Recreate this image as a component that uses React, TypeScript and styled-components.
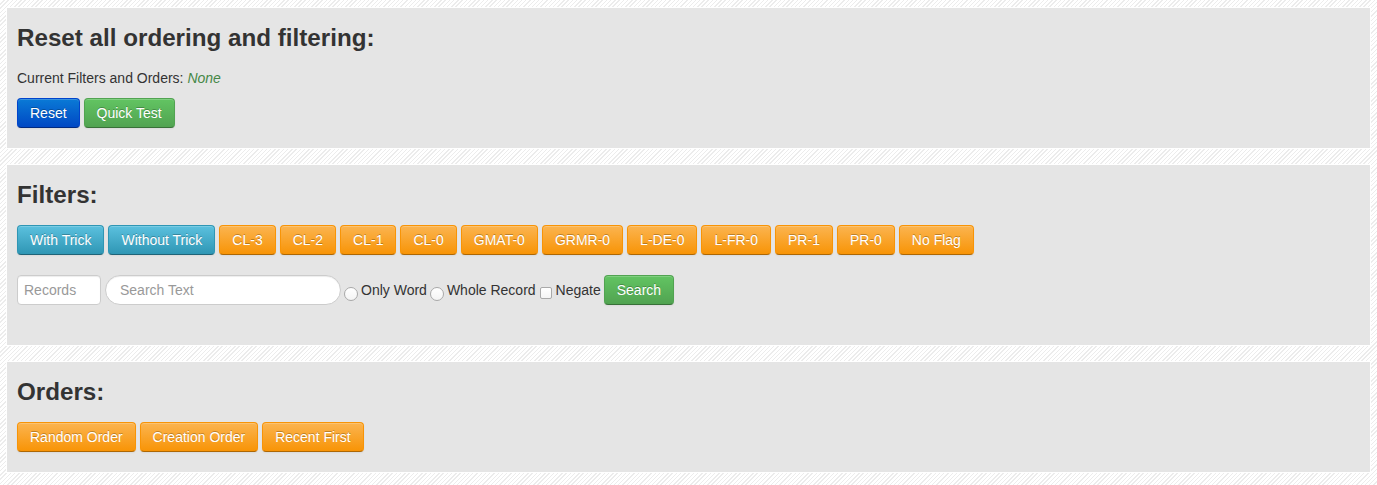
import React from "react";
import styled, { createGlobalStyle, css } from "styled-components";

const GlobalStyle = createGlobalStyle`
  html, body {
    margin: 0;
    padding: 0;
  }
  body {
    font-family: "Liberation Sans", Arial, Helvetica, sans-serif;
    font-size: 14px;
    line-height: 20px;
    color: #333;
    background-color: #fbfbfb;
    background-image: repeating-linear-gradient(
      -45deg,
      #ffffff 0px,
      #ffffff 2px,
      #ececec 2px,
      #ececec 3px
    );
    min-height: 485px;
  }
`;

const Page = styled.div`
  padding: 7px 6px 8px 6px;
  display: flex;
  flex-direction: column;
  gap: 15px;
`;

const Panel = styled.section<{ $bottom?: number }>`
  background: #e5e5e5;
  border: 1px solid #ffffff;
  padding: 10px 10px ${(p) => p.$bottom ?? 20}px 10px;
`;

const Heading = styled.h3`
  margin: 0 0 10px 0;
  font-size: 24.2px;
  line-height: 40px;
  font-weight: bold;
  color: #333;
`;

const Info = styled.p`
  margin: 0 0 10px 0;
  font-size: 14px;
  line-height: 20px;
`;

const NoneText = styled.em`
  color: #468847;
`;

const ButtonRow = styled.div`
  display: flex;
  flex-wrap: wrap;
  gap: 4px;
`;

type Variant = "primary" | "success" | "info" | "warning";

const variants: Record<Variant, ReturnType<typeof css>> = {
  primary: css`
    background-image: linear-gradient(to bottom, #0a7ad6, #0048c4);
    border-color: #0044cc #0044cc #002a80;
  `,
  success: css`
    background-image: linear-gradient(to bottom, #62c462, #51a351);
    border-color: #51a351 #51a351 #387038;
  `,
  info: css`
    background-image: linear-gradient(to bottom, #5bc0de, #2f96b4);
    border-color: #2f96b4 #2f96b4 #1f6377;
  `,
  warning: css`
    background-image: linear-gradient(to bottom, #fbb450, #f89406);
    border-color: #f89406 #f89406 #ad6704;
  `,
};

const Button = styled.button<{ $variant: Variant }>`
  font-family: "Liberation Sans", Arial, Helvetica, sans-serif;
  font-size: 14px;
  line-height: 20px;
  padding: 4px 12px;
  height: 30px;
  color: #fff;
  text-shadow: 0 -1px 0 rgba(0, 0, 0, 0.25);
  border: 1px solid;
  border-radius: 4px;
  box-shadow: inset 0 1px 0 rgba(255, 255, 255, 0.2), 0 1px 2px rgba(0, 0, 0, 0.05);
  cursor: pointer;
  white-space: nowrap;
  ${(p) => variants[p.$variant]}
`;

const SearchForm = styled.form`
  display: flex;
  align-items: center;
  margin-top: 20px;
`;

const baseInput = css`
  font-family: "Liberation Sans", Arial, Helvetica, sans-serif;
  font-size: 14px;
  line-height: 20px;
  height: 30px;
  box-sizing: border-box;
  border: 1px solid #cccccc;
  background: #fff;
  color: #555;
  box-shadow: inset 0 1px 1px rgba(0, 0, 0, 0.075);
  outline: none;
  &::placeholder {
    color: #999;
  }
`;

const RecordsInput = styled.input`
  ${baseInput}
  width: 84px;
  padding: 4px 6px;
  border-radius: 4px;
  margin-right: 4px;
`;

const SearchInput = styled.input`
  ${baseInput}
  width: 236px;
  padding: 4px 14px;
  border-radius: 15px;
`;

const Radio = styled.input`
  appearance: none;
  -webkit-appearance: none;
  width: 14px;
  height: 14px;
  margin: 8px 3px 0 3px;
  border-radius: 50%;
  border: 1px solid #a9a9a9;
  background: linear-gradient(to bottom, #ffffff, #f4f4f4);
  box-sizing: border-box;
  flex: none;
`;

const Checkbox = styled.input`
  appearance: none;
  -webkit-appearance: none;
  width: 12px;
  height: 12px;
  margin: 6px 4px 0 4px;
  border-radius: 2px;
  border: 1px solid #a9a9a9;
  background: linear-gradient(to bottom, #ffffff, #f4f4f4);
  box-sizing: border-box;
  flex: none;
`;

const OptionLabel = styled.label<{ $mr?: number }>`
  font-size: 14px;
  line-height: 20px;
  color: #333;
  margin-right: ${(p) => p.$mr ?? 0}px;
  white-space: nowrap;
`;

const flagButtons = [
  "CL-3",
  "CL-2",
  "CL-1",
  "CL-0",
  "GMAT-0",
  "GRMR-0",
  "L-DE-0",
  "L-FR-0",
  "PR-1",
  "PR-0",
  "No Flag",
];

export default function App() {
  return (
    <>
      <GlobalStyle />
      <Page>
        <Panel>
          <Heading>Reset all ordering and filtering:</Heading>
          <Info>
            Current Filters and Orders: <NoneText>None</NoneText>
          </Info>
          <ButtonRow>
            <Button $variant="primary">Reset</Button>
            <Button $variant="success">Quick Test</Button>
          </ButtonRow>
        </Panel>

        <Panel $bottom={40}>
          <Heading>Filters:</Heading>
          <ButtonRow>
            <Button $variant="info">With Trick</Button>
            <Button $variant="info">Without Trick</Button>
            {flagButtons.map((b) => (
              <Button key={b} $variant="warning">
                {b}
              </Button>
            ))}
          </ButtonRow>
          <SearchForm onSubmit={(e) => e.preventDefault()}>
            <RecordsInput placeholder="Records" />
            <SearchInput placeholder="Search Text" />
            <Radio type="radio" name="mode" id="only-word" />
            <OptionLabel htmlFor="only-word">Only Word</OptionLabel>
            <Radio type="radio" name="mode" id="whole-record" />
            <OptionLabel htmlFor="whole-record">Whole Record</OptionLabel>
            <Checkbox type="checkbox" id="negate" />
            <OptionLabel htmlFor="negate" $mr={3}>
              Negate
            </OptionLabel>
            <Button $variant="success" type="submit">
              Search
            </Button>
          </SearchForm>
        </Panel>

        <Panel>
          <Heading>Orders:</Heading>
          <ButtonRow>
            <Button $variant="warning">Random Order</Button>
            <Button $variant="warning">Creation Order</Button>
            <Button $variant="warning">Recent First</Button>
          </ButtonRow>
        </Panel>
      </Page>
    </>
  );
}
